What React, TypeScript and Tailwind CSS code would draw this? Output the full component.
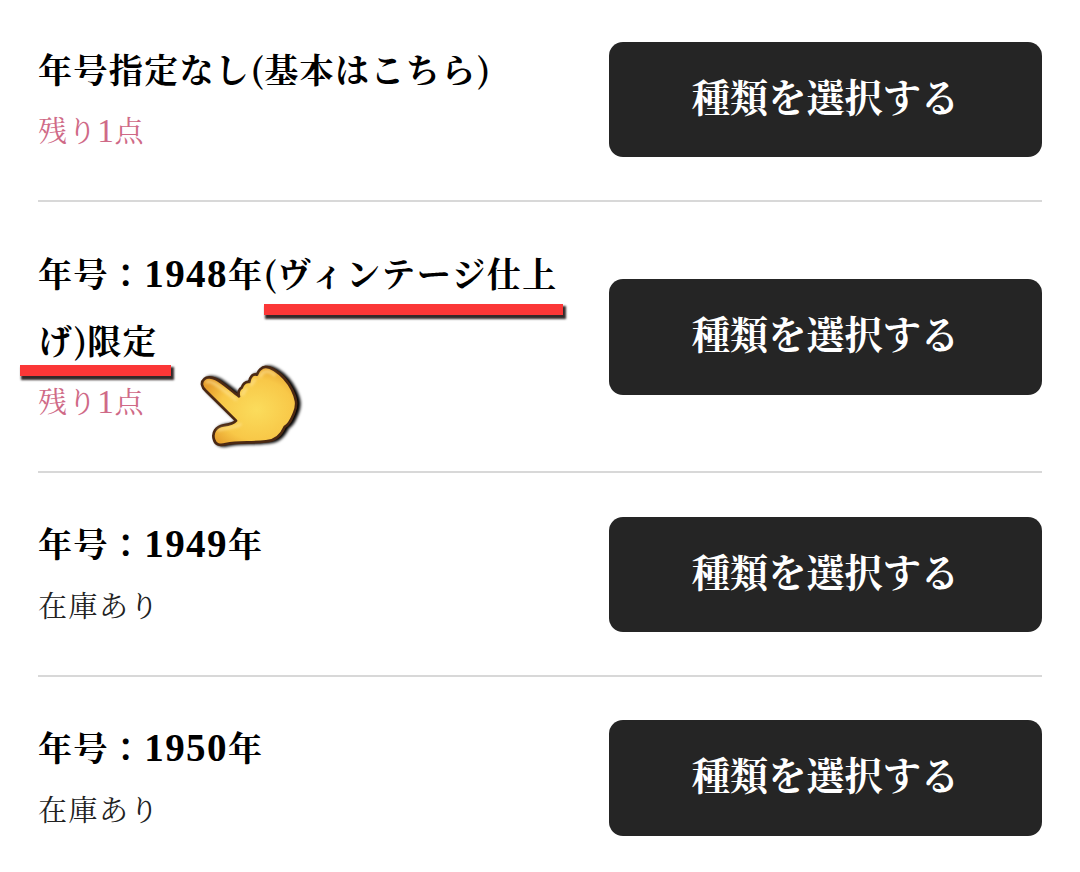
type Variant = {
  id: number;
  lines: string[];
  stock: string;
  low?: boolean;
  marked?: boolean;
};

const VARIANTS: Variant[] = [
  { id: 1, lines: ["年号指定なし(基本はこちら)"], stock: "残り1点", low: true },
  {
    id: 2,
    lines: ["年号：1948年(ヴィンテージ仕上", "げ)限定"],
    stock: "残り1点",
    low: true,
    marked: true,
  },
  { id: 3, lines: ["年号：1949年"], stock: "在庫あり" },
  { id: 4, lines: ["年号：1950年"], stock: "在庫あり" },
];

const HAND =
  "M43 87C31 97 35 112 48 123L138 212C132 220 119 224 101 226C78 230 65 247 72 269C76 285 91 287 108 282C145 275 183 279 228 274C263 272 276 250 284 231C300 222 305 206 313 187C323 164 319 145 306 119C294 95 277 75 253 60C235 49 222 46 211 58C205 63 203 70 201 74C189 70 180 79 178 96C164 94 158 105 155 113C147 116 144 129 147 139C126 124 99 98 77 87C65 81 50 80 43 87Z";

/** Digits are set a little larger than the kanji, brackets a little tighter. */
function MixedText({ text }: { text: string }) {
  return text.split(/([0-9]+|[()])/).map((part, i) =>
    i % 2 ? (
      <span
        key={i}
        className={
          /[()]/.test(part)
            ? "font-['Noto_Serif_CJK_JP','Noto_Sans_CJK_JP',serif] tracking-[0.2px]"
            : "text-[1.15em]"
        }
      >
        {part}
      </span>
    ) : (
      part
    ),
  );
}

function VariantRow({ variant }: { variant: Variant }) {
  return (
    <li className="flex items-center justify-between border-b-2 border-[#d8d8d8] py-[37.5px] last:border-b-0">
      <div className="relative">
        <div className="text-[34px] font-bold tracking-[1.4px] text-black">
          {variant.lines.map((line) => (
            <p key={line} className="h-[67.3px] whitespace-nowrap leading-[65.4px]">
              <MixedText text={line} />
            </p>
          ))}
        </div>
        <p
          className={`h-[59.5px] text-[29px] ${
            variant.low
              ? "leading-[56.6px] tracking-[0.6px] text-[#cf6a87]"
              : "leading-[59px] tracking-[1.5px] text-[#222222]"
          }`}
        >
          <MixedText text={variant.stock} />
        </p>
        {variant.marked && <Markers />}
      </div>
      <button
        type="button"
        className="h-[115.5px] w-[433px] shrink-0 rounded-[14px] bg-[#252525] text-[38.2px] font-bold text-white"
      >
        種類を選択する
      </button>
    </li>
  );
}

/** Red underlines and pointing hand laid over the limited edition. */
function Markers() {
  return (
    <>
      <div className="absolute left-[226px] top-[64.5px] h-[11px] w-[299px] bg-[#fb3737] shadow-[2px_3px_2px_1px_#332a2a]" />
      <div className="absolute -left-[18px] top-[125px] h-[11px] w-[151px] bg-[#fb3737] shadow-[2px_3px_2px_1px_#332a2a]" />
      <PointingHand />
    </>
  );
}

function PointingHand() {
  return (
    <svg
      viewBox="0 0 375 330"
      className="absolute left-[152px] top-[110px] h-[110px] w-[125px]"
      aria-hidden="true"
    >
      <defs>
        <radialGradient id="skin" cx="0.58" cy="0.55" r="0.6">
          <stop offset="0" stopColor="#fbdc5c" />
          <stop offset="0.65" stopColor="#f8c848" />
          <stop offset="1" stopColor="#e59d2c" />
        </radialGradient>
        <filter id="soft" x="-20%" y="-20%" width="140%" height="140%">
          <feGaussianBlur stdDeviation="4" />
        </filter>
      </defs>
      <path
        d={HAND}
        transform="translate(8 1)"
        fill="#000"
        stroke="#000"
        strokeWidth="11"
        filter="url(#soft)"
      />
      <path d={HAND} fill="url(#skin)" stroke="#4a2813" strokeWidth="8" strokeLinejoin="round" />
      <g
        fill="none"
        stroke="#ffe9a0"
        strokeWidth="7"
        strokeLinecap="round"
        opacity="0.75"
        filter="url(#soft)"
      >
        <path d="M50 96C66 88 94 117 138 148" />
        <path d="M157 134L168 116M183 105L195 89M211 80C220 58 237 62 254 75" />
        <path d="M86 240C108 232 135 235 151 223" />
      </g>
    </svg>
  );
}

export default function App() {
  return (
    <main
      lang="ja"
      className="h-[872px] w-[1080px] overflow-hidden bg-white px-[38px] font-['Liberation_Serif','Noto_Serif_CJK_JP','Noto_Sans_CJK_JP',serif]"
    >
      <ul className="-mt-[1.5px]">
        {VARIANTS.map((v) => (
          <VariantRow key={v.id} variant={v} />
        ))}
      </ul>
    </main>
  );
}
